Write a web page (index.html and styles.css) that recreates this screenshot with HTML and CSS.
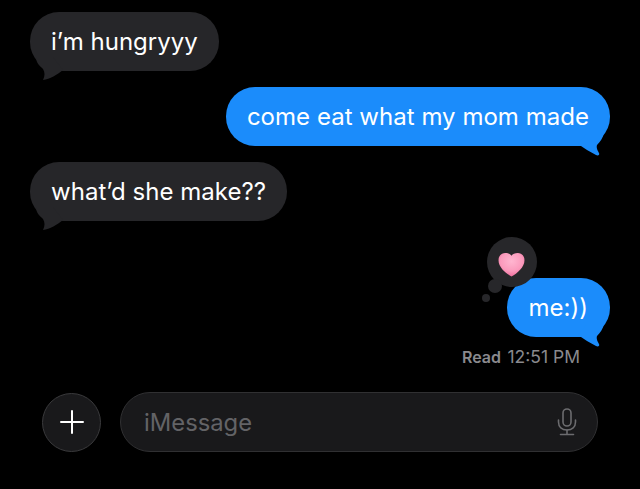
FILE: index.html
```html
<!DOCTYPE html>
<html lang="en">
<head>
    <meta charset="UTF-8">
    <meta name="viewport" content="width=device-width, initial-scale=1.0">
    <title>Messages</title>
    <link rel="stylesheet" href="styles.css">
</head>
<body>

    <!-- Conversation -->
    <main class="thread">
        <div class="bubble received">
            i’m hungryyy
            <svg class="tail" width="34" height="24" viewBox="0 0 34 24"><path d="M3 0C3 6 7 9 10 12C12 15 12 19 10 23C17 22 24 18 30 13L20 0Z"/></svg>
        </div>
        <div class="bubble sent">
            come eat what my mom made
            <svg class="tail" width="34" height="24" viewBox="0 0 34 24"><path d="M31 0C30 5 27 9 24 12C23 15 25 18 26 20C27 22 25 23 23 22C17 19 11 15 5 11L14 0Z"/></svg>
        </div>
        <div class="bubble received">
            what’d she make??
            <svg class="tail" width="34" height="24" viewBox="0 0 34 24"><path d="M3 0C3 6 7 9 10 12C12 15 12 19 10 23C17 22 24 18 30 13L20 0Z"/></svg>
        </div>
        <div class="bubble sent reacted">
            me:))
            <svg class="tail" width="34" height="24" viewBox="0 0 34 24"><path d="M31 0C30 5 27 9 24 12C23 15 25 18 26 20C27 22 25 23 23 22C17 19 11 15 5 11L14 0Z"/></svg>
            <!-- Tapback -->
            <div class="tapback">
                <svg class="heart" width="27" height="25" viewBox="0 0 28 26">
                    <defs>
                        <radialGradient id="heartFill" cx="0.5" cy="0.35" r="0.7">
                            <stop offset="0" stop-color="#ffb6d0"/>
                            <stop offset="0.6" stop-color="#fb9abc"/>
                            <stop offset="1" stop-color="#ec6496"/>
                        </radialGradient>
                    </defs>
                    <path d="M14 25.500C8 22 0.500 16 0.500 8.500C0.500 3.500 4 1 7.500 1C10.500 1 12.800 2 14 4C15.200 2 17.500 1 20.500 1C24 1 27.500 3.500 27.500 8.500C27.500 16 20 22 14 25.500Z" fill="url(#heartFill)"/>
                </svg>
                <span class="dot dot-mid"></span>
                <span class="dot dot-small"></span>
            </div>
        </div>
        <div class="receipt"><b>Read</b> <span class="receipt-time">12:51 PM</span></div>
    </main>

    <!-- Input bar -->
    <footer class="composer">
        <div class="plus-btn">
            <svg width="24" height="24" viewBox="0 0 24 24"><path d="M12 1V23M1 12H23" stroke="#fff" stroke-width="2" stroke-linecap="round"/></svg>
        </div>
        <div class="input-box">
            <span class="placeholder">iMessage</span>
            <svg class="mic" width="20" height="28" viewBox="0 0 20 28" fill="none" stroke="#6c6c6f" stroke-width="1.600" stroke-linecap="round">
                <rect x="6" y="1" width="8" height="17" rx="4"/>
                <path d="M1.500 12V14C1.500 19 5 22 10 22C15 22 18.500 19 18.500 14V12"/>
                <path d="M10 22V26.500M3.500 26.500H16.500"/>
            </svg>
        </div>
    </footer>

</body>
</html>
```

FILE: styles.css
```css
* {
    box-sizing: border-box;
}
body {
    margin: 0;
    height: 489px;
    overflow: hidden;
    background-color: #000;
    font-family: Inter, "Liberation Sans", sans-serif;
    color: #fff;
}
.thread {
    display: flex;
    flex-direction: column;
    gap: 16px;
    padding: 12px 30px 0;
}
.bubble {
    position: relative;
    height: 59px;
    padding: 0 21px;
    border-radius: 29px;
    display: flex;
    align-items: center;
    font-size: 24px;
    letter-spacing: 0.03px;
    white-space: nowrap;
}
.received {
    align-self: flex-start;
    background-color: #262629;
}
.received .tail {
    position: absolute;
    left: 3px;
    bottom: -10px;
    fill: #262629;
}
.sent {
    align-self: flex-end;
    background-color: #1b8cfb;
}
.sent .tail {
    position: absolute;
    right: 3px;
    bottom: -11px;
    fill: #1b8cfb;
}
.reacted {
    margin-top: 41px;
    padding: 0 22px;
    letter-spacing: 0;
}
.tapback {
    position: absolute;
    left: -20px;
    top: -41px;
    width: 50px;
    height: 50px;
    border-radius: 50%;
    background-color: #27272a;
    display: flex;
    align-items: center;
    justify-content: center;
}
.heart {
    margin-top: 4px;
}
.dot {
    position: absolute;
    border-radius: 50%;
    background-color: #27272a;
}
.dot-mid {
    left: 1px;
    top: 42px;
    width: 14px;
    height: 14px;
}
.dot-small {
    left: -5px;
    top: 57px;
    width: 8px;
    height: 8px;
}
.receipt {
    align-self: flex-end;
    margin-top: -7px;
    margin-right: 30px;
    font-size: 16px;
    color: #8a8a8e;
}
.receipt b {
    margin-right: 2px;
    font-weight: 600;
}
.receipt-time {
    font-size: 17.500px;
}
.composer {
    position: absolute;
    left: 42px;
    right: 42px;
    top: 392px;
    display: flex;
    align-items: center;
    gap: 19px;
}
.plus-btn {
    flex: none;
    width: 59px;
    height: 59px;
    border-radius: 50%;
    background-color: #19191b;
    border: 1px solid #3a3a3c;
    display: flex;
    align-items: center;
    justify-content: center;
}
.input-box {
    flex: 1;
    height: 60px;
    padding: 0 20px 0 23px;
    border-radius: 30px;
    background-color: #19191b;
    border: 1px solid #303032;
    display: flex;
    align-items: center;
    justify-content: space-between;
}
.placeholder {
    font-size: 23.800px;
    color: #636366;
}
```
